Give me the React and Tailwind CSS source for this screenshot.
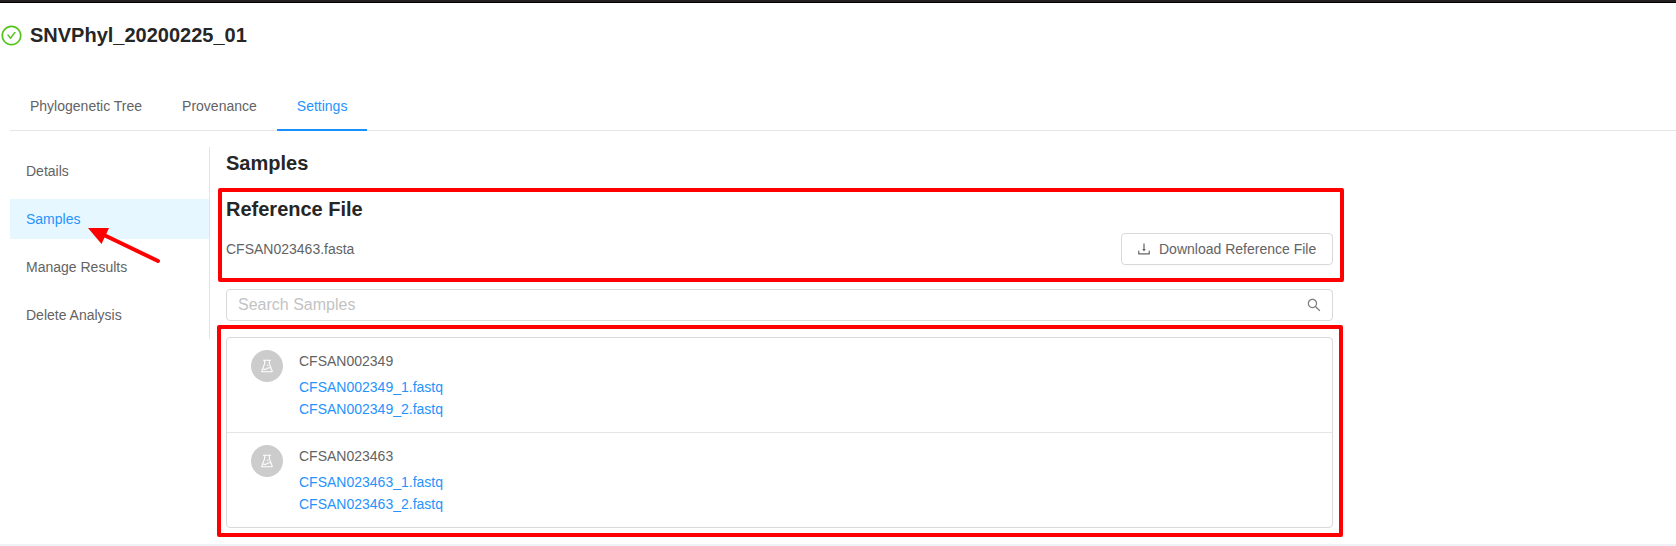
import React from "react";
import {
  AiOutlineCheckCircle,
  AiOutlineDownload,
  AiOutlineSearch,
  AiOutlineExperiment,
} from "react-icons/ai";

const tabs = ["Phylogenetic Tree", "Provenance", "Settings"];
const menu = ["Details", "Samples", "Manage Results", "Delete Analysis"];
const samples = ["CFSAN002349", "CFSAN023463"];

function Tabs() {
  return (
    <nav className="ml-[10px] flex h-[49px] border-b border-[#e4e5e6]">
      {tabs.map((t) => (
        <div
          key={t}
          className={
            t === "Settings"
              ? "-mb-px h-[49px] border-b-2 border-[#1890ff] px-5 leading-[48px] text-[#2693fc]"
              : "h-[48px] px-5 leading-[48px]"
          }
        >
          {t}
        </div>
      ))}
    </nav>
  );
}

function SideMenu() {
  return (
    <ul className="flex h-[192px] w-[200px] flex-col gap-2 border-r border-[#e4e5e6] py-1">
      {menu.map((m) => (
        <li
          key={m}
          className={
            m === "Samples"
              ? "h-10 bg-[#e6f7ff] pl-4 leading-10 text-[#2693fc]"
              : "h-10 pl-4 leading-10"
          }
        >
          {m}
        </li>
      ))}
    </ul>
  );
}

function Sample({ name }) {
  return (
    <li className="flex h-[95px] gap-4 border-b border-[#e4e5e6] px-6 py-3 last:h-[94px] last:border-b-0">
      <span className="flex size-8 items-center justify-center rounded-full bg-[#cccccc] text-white">
        <AiOutlineExperiment size={16} />
      </span>
      <div className="leading-[22px]">
        <div className="mb-1">{name}</div>
        <div className="text-[#2693fc]">{name}_1.fastq</div>
        <div className="text-[#2693fc]">{name}_2.fastq</div>
      </div>
    </li>
  );
}

export default function App() {
  return (
    <div className="relative flex h-[546px] flex-col overflow-hidden bg-white font-['Liberation_Sans',Arial,sans-serif] text-sm text-[#636363]">
      <div className="h-[3px] shrink-0 border-b border-black bg-[#231f20]" />
      <header className="flex h-[79px] items-start pt-[18px]">
        <AiOutlineCheckCircle size={23} className="mt-[3px] text-[#52c41a]" />
        <h1 className="ml-[7px] text-xl leading-7 font-bold text-[#262626]">SNVPhyl_20200225_01</h1>
      </header>
      <Tabs />
      <main className="flex pt-4 pl-[10px]">
        <SideMenu />
        <section className="ml-4 w-[1107px] pt-[2px]">
          <h2 className="text-xl leading-7 font-bold text-[#262626]">Samples</h2>
          <h3 className="mt-[18px] text-xl leading-7 font-bold text-[#262626]">Reference File</h3>
          <div className="mt-[10px] flex h-8 items-center justify-between">
            <span>CFSAN023463.fasta</span>
            <button className="flex h-8 w-[212px] items-center gap-[7px] rounded border border-[#d9d9d9] pl-[14px] shadow-[0_2px_0_rgba(0,0,0,0.016)]">
              <AiOutlineDownload size={16} />
              <span>Download Reference File</span>
            </button>
          </div>
          <div className="mt-6 flex h-8 items-center justify-between rounded border border-[#d9d9d9] pr-[10px] pl-[11px]">
            <span className="text-base text-[#c3c3c3]">Search Samples</span>
            <AiOutlineSearch size={16} className="text-[#7f7f7f]" />
          </div>
          <ul className="mt-4 rounded border border-[#d9d9d9]">
            {samples.map((s) => (
              <Sample key={s} name={s} />
            ))}
          </ul>
        </section>
      </main>
      <div className="absolute inset-x-0 bottom-0 h-[2px] bg-[#f0f0f7]" />

      {/* Annotations over the page */}
      <div className="absolute top-[188px] left-[218px] h-[94px] w-[1126px] rounded-[2px] border-4 border-[#ff0000]" />
      <div className="absolute top-[325px] left-[217px] h-[212px] w-[1126px] rounded-[2px] border-4 border-[#ff0000]" />
      <svg className="absolute top-[220px] left-[80px]" width="90" height="50" viewBox="0 0 90 50">
        <path d="M8 8H29L21.5 24Z" fill="#ff0000" />
        <path d="M24 15L78 41" stroke="#ff0000" strokeWidth="4" strokeLinecap="round" />
      </svg>
    </div>
  );
}
